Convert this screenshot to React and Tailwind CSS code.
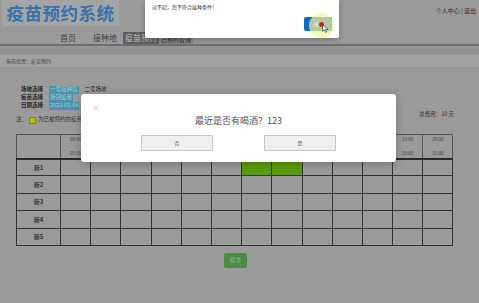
const slots = [
  ['08:00', '09:00'], ['09:00', '10:00'], ['10:00', '11:00'], ['11:00', '12:00'],
  ['12:00', '13:00'], ['13:00', '14:00'], ['14:00', '15:00'], ['15:00', '16:00'],
  ['16:00', '17:00'], ['17:00', '18:00'], ['18:00', '19:00'], ['19:00', '20:00'],
  ['20:00', '21:00'],
];
const rows = ['新1', '新2', '新3', '新4', '新5'];
const booked = { '新1': [6, 7] };

function Cursor() {
  return (
    <div className="absolute left-[309px] top-[13px] w-[25px] h-[25px] rounded-full bg-[#f4f49a]/70">
      <div className="absolute left-[10px] top-[9px] w-[5px] h-[5px] rounded-full bg-[#d82020]" />
      <svg className="absolute left-[13px] top-[11px]" width="7" height="9" viewBox="0 0 7 9">
        <path d="M0.5 0.5 L0.5 7.5 L2.3 5.8 L3.6 8.5 L4.6 8 L3.4 5.4 L6 5.4 Z" fill="#fff" stroke="#222" strokeWidth="0.6" />
      </svg>
    </div>
  );
}

export default function App() {
  return (
    <div className="relative w-[479px] h-[303px] overflow-hidden bg-[#9a9a9a] text-[#333] [font-family:'Noto_Sans_CJK_SC','Noto_Sans',sans-serif]">
      {/* Header */}
      <div className="h-[44px] flex flex-col">
        <div className="flex justify-between h-[32px]">
          <div className="ml-[2px] w-[117px] h-[26px] bg-[#a4a4a4] flex items-center justify-center text-[17.5px] font-bold tracking-[0.5px] text-[#3a72ad] leading-none">
            疫苗预约系统
          </div>
          <div className="mt-[8px] mr-[3px] text-[6px] text-[#333] leading-none">个人中心 | 退出</div>
        </div>
        <div className="flex items-end h-[12px] pl-[55px] text-[8px] leading-none">
          <div className="px-[5px] h-[12px] flex items-center text-[#444]">首页</div>
          <div className="ml-[7px] px-[5px] h-[12px] flex items-center text-[#444]">接种地</div>
          <div className="ml-[1px] px-[2px] h-[12px] flex items-center bg-[#5f5f5f] text-[#bdbdbd]">疫苗预约</div>
          <div className="px-[2px] h-[9px] flex items-center bg-[#8a8a8a] text-[#333] text-[6px]">已预约查询</div>
        </div>
      </div>
      <div className="h-[2px] bg-[#6e6e6e]" />
      <div className="h-[9px] bg-[#939393]" />
      <div className="h-[13px] bg-[#a1a1a1] border-b border-[#959595] flex items-center pl-[6px] text-[5px] text-[#444]">
        当前位置：疫苗预约
      </div>

      {/* Selection */}
      <div className="relative pl-[21px] pt-[18px] text-[5.5px] leading-none">
        <div className="flex items-center h-[8px] gap-[5px]">
          <span className="font-bold text-[#222] w-[23px]">场地选择</span>
          <span className="bg-[#4b93ab] text-[#a9cdd8] px-[1px] py-[1px]">一号接种馆</span>
          <span className="ml-[1px] text-[#222]">二号场地</span>
        </div>
        <div className="flex items-center h-[8px] gap-[5px]">
          <span className="font-bold text-[#222] w-[23px]">疫苗选择</span>
          <span className="bg-[#4b93ab] text-[#a9cdd8] px-[1px] py-[1px]">新冠疫苗</span>
        </div>
        <div className="flex items-center h-[8px] gap-[5px]">
          <span className="font-bold text-[#222] w-[23px]">日期选择</span>
          <span className="bg-[#4b93ab] text-[#a9cdd8] px-[1px] py-[1px]">2023-05-04</span>
        </div>
        <div className="flex items-center justify-between mt-[5px] h-[10px]">
          <div className="flex items-center gap-[2px] -ml-[5px]">
            <span className="text-[#333]">注：</span>
            <span className="w-[7px] h-[7px] bg-[#b9b900] border border-[#777]" />
            <span className="text-[#333]">为已被预约的疫苗</span>
          </div>
          <span className="mr-[25px] -mt-[11px] text-[#333]">总费用：10 元</span>
        </div>
      </div>

      {/* Table */}
      <div className="pl-[16px] pt-[9px]">
        <table className="border-collapse border border-[#666] text-[4.5px] leading-[5px] text-[#444]">
          <thead>
            <tr className="h-[24px] border-b-2 border-[#2a2a2a]">
              <th className="w-[44px] border border-[#555]" />
              {slots.map(([a, b]) => (
                <th key={a} className="w-[30.2px] border border-[#555] font-normal align-top pt-[2px]">
                  <div>{a}</div>
                  <div className="my-[2px]">-</div>
                  <div>{b}</div>
                </th>
              ))}
            </tr>
          </thead>
          <tbody>
            {rows.map((r) => (
              <tr key={r} className="h-[17.4px]">
                <td className="border border-[#333] text-center font-bold text-[6px] text-[#333]">{r}</td>
                {slots.map((s, i) => (
                  <td
                    key={i}
                    className={
                      (booked[r] || []).includes(i)
                        ? 'border border-[#333] bg-[#5a9d0e]'
                        : 'border border-[#333]'
                    }
                  />
                ))}
              </tr>
            ))}
          </tbody>
        </table>
        <div className="flex pl-[208px] pt-[7px]">
          <button className="w-[23px] h-[15px] rounded-[2px] bg-[#4a8c46] text-[5.5px] text-[#8fb98c]">提交</button>
        </div>
      </div>

      {/* Alert dialog */}
      <div className="absolute left-[145px] top-0 w-[194px] h-[38px] bg-white rounded-b-[2px] shadow-[0_2px_6px_rgba(0,0,0,0.25)]">
        <div className="pl-[7px] pt-[4px] text-[5px] text-[#333] leading-none">对不起，您不符合接种条件！</div>
        <div className="absolute left-[159px] top-[17px] w-[28px] h-[14px] rounded-[2px] bg-[#0c6bbf] flex items-center justify-center text-[5px] text-[#cfe3f5]">确定</div>
      </div>
      <Cursor />

      {/* Confirm dialog */}
      <div className="absolute left-[81px] top-[94px] w-[315px] h-[68px] bg-white rounded-[3px] shadow-[0_2px_8px_rgba(0,0,0,0.25)] flex flex-col items-center">
        <span className="absolute left-[10px] top-[9px] text-[10px] leading-none text-[#ccc]">×</span>
        <div className="mt-[22px] text-[9px] leading-none text-[#555]">最近是否有喝酒？123</div>
        <div className="mt-[10px] flex gap-[51px]">
          <button className="w-[72px] h-[16px] bg-[#efefef] border border-[#c8c8c8] rounded-[1px] text-[5px] text-[#666]">否</button>
          <button className="w-[72px] h-[16px] bg-[#efefef] border border-[#c8c8c8] rounded-[1px] text-[5px] text-[#666]">是</button>
        </div>
      </div>
    </div>
  );
}
